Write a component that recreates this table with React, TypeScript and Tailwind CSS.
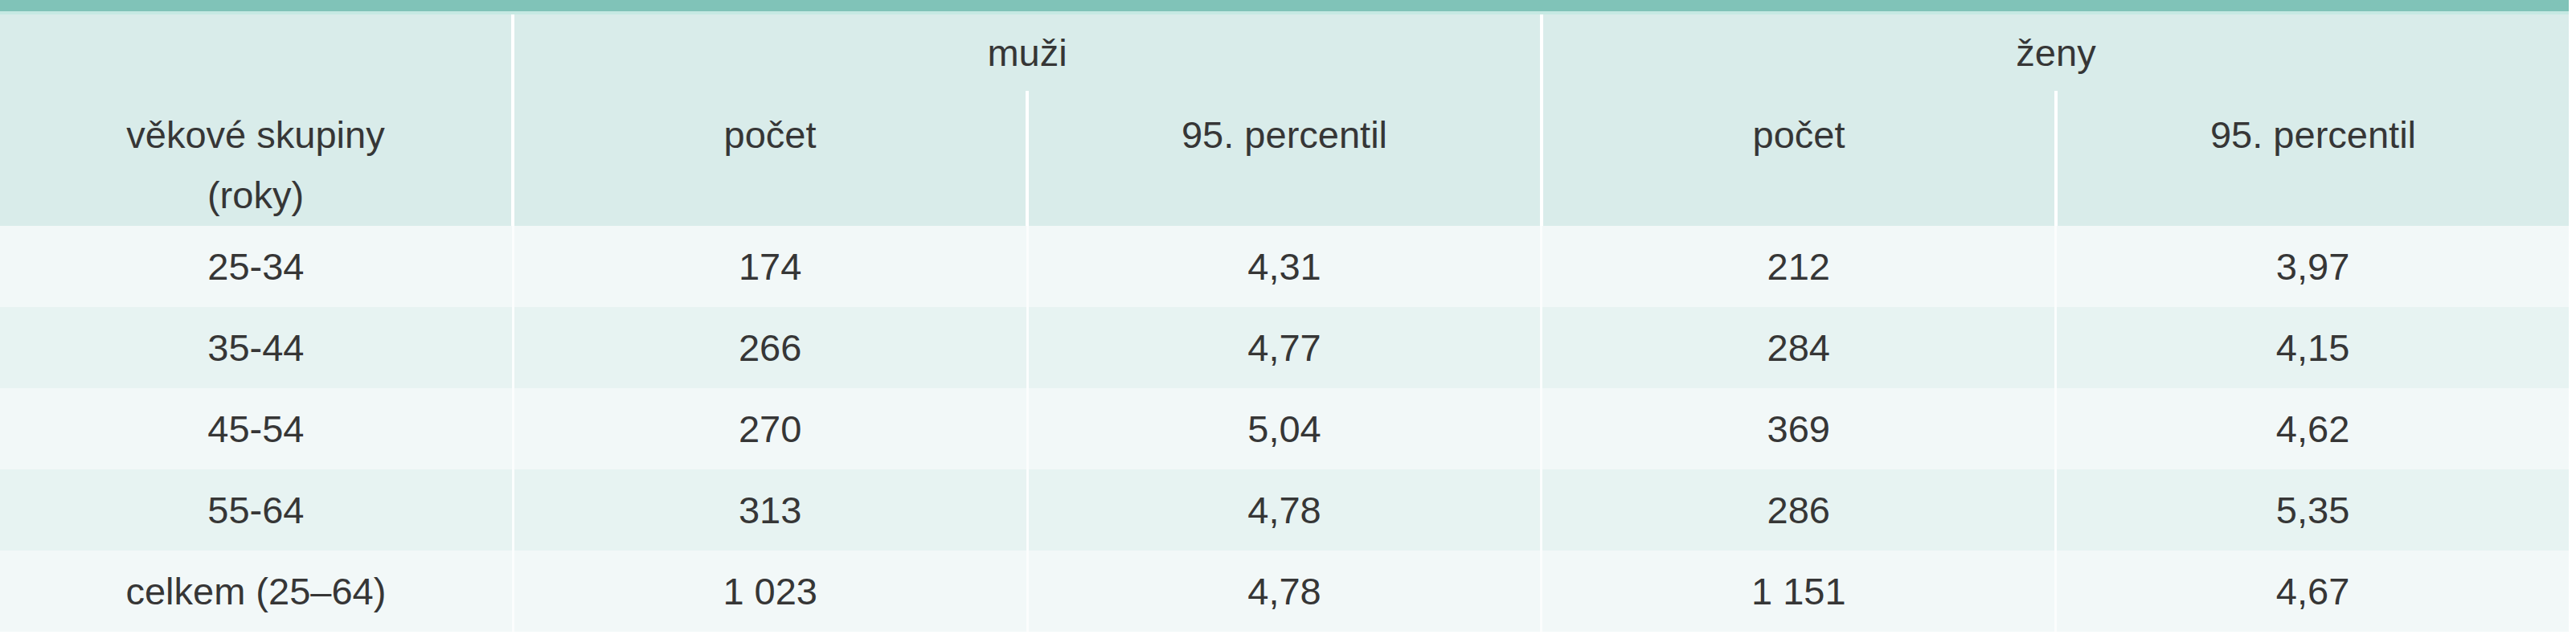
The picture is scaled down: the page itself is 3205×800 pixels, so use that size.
import React from "react";

const rows = [
  { age: "25-34", mp: "174", mv: "4,31", zp: "212", zv: "3,97" },
  { age: "35-44", mp: "266", mv: "4,77", zp: "284", zv: "4,15" },
  { age: "45-54", mp: "270", mv: "5,04", zp: "369", zv: "4,62" },
  { age: "55-64", mp: "313", mv: "4,78", zp: "286", zv: "5,35" },
  { age: "celkem (25–64)", mp: "1 023", mv: "4,78", zp: "1 151", zv: "4,67" },
];

export default function App() {
  return (
    <div
      className="w-[3205px] h-[800px] bg-white text-[#363636] text-[47px]"
      style={{ fontFamily: '"Liberation Sans", Arial, sans-serif' }}
    >
      <div className="w-[3196px]">
        <div className="h-[14px] bg-[#80c3b8]" />
        <div className="h-[4px] bg-[#c6e9e3]" />
        {/* header */}
        <div className="grid grid-cols-5 gap-x-[4px] bg-white grid-rows-[95px_168px]">
          <div className="row-span-2 bg-[#d9ecea] flex flex-col justify-end items-center leading-[75px] text-center pb-[1px]">
            <span>věkové skupiny</span>
            <span>(roky)</span>
          </div>
          <div className="col-span-2 bg-[#d9ecea] flex items-center justify-center leading-[54px]">
            muži
          </div>
          <div className="col-span-2 bg-[#d9ecea] flex items-center justify-center leading-[54px]">
            ženy
          </div>
          <div className="bg-[#d9ecea] text-center leading-[75px] pt-[17px]">počet</div>
          <div className="bg-[#d9ecea] text-center leading-[75px] pt-[17px]">95. percentil</div>
          <div className="bg-[#d9ecea] text-center leading-[75px] pt-[17px]">počet</div>
          <div className="bg-[#d9ecea] text-center leading-[75px] pt-[17px]">95. percentil</div>
        </div>
        {/* body */}
        <div className="flex flex-col">
          {rows.map((r, i) => {
            const bg = i % 2 === 0 ? "bg-[#f2f8f8]" : "bg-[#e7f3f2]";
            return (
              <div key={i} className="grid grid-cols-5 gap-x-[3px] bg-[#fbfdfd] h-[101px]">
                {[r.age, r.mp, r.mv, r.zp, r.zv].map((v, j) => (
                  <div key={j} className={`${bg} flex items-center justify-center leading-[54px]`}>
                    {v}
                  </div>
                ))}
              </div>
            );
          })}
        </div>
      </div>
    </div>
  );
}
